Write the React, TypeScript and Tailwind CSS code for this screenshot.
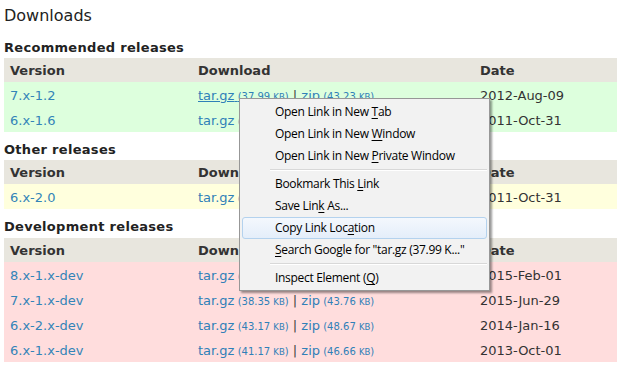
import React from "react";

type Row = {
  version: string;
  tar: string;
  zip: string;
  date: string;
  hover?: boolean;
};

const recommended: Row[] = [
  { version: "7.x-1.2", tar: "37.99", zip: "43.23", date: "2012-Aug-09", hover: true },
  { version: "6.x-1.6", tar: "41.02", zip: "46.18", date: "2011-Oct-31" },
];
const other: Row[] = [{ version: "6.x-2.0", tar: "42.81", zip: "48.03", date: "2011-Oct-31" }];
const dev: Row[] = [
  { version: "8.x-1.x-dev", tar: "39.12", zip: "44.50", date: "2015-Feb-01" },
  { version: "7.x-1.x-dev", tar: "38.35", zip: "43.76", date: "2015-Jun-29" },
  { version: "6.x-2.x-dev", tar: "43.17", zip: "48.67", date: "2014-Jan-16" },
  { version: "6.x-1.x-dev", tar: "41.17", zip: "46.66", date: "2013-Oct-01" },
];

function Size({ v }: { v: string }) {
  return (
    <span className="text-[10px]">
      {" "}({v} <span className="text-[8.5px]">KB</span>)
    </span>
  );
}

function Table({ rows, bg }: { rows: Row[]; bg: string }) {
  return (
    <div className="text-[13px]">
      <div className="grid grid-cols-[188px_282px_1fr] h-[24px] pt-[2px] items-center bg-[#e8e6de] font-bold text-[#333]">
        <div className="pl-[6px]">Version</div>
        <div className="pl-[6px]">Download</div>
        <div className="pl-[6px]">Date</div>
      </div>
      {rows.map((r) => (
        <div key={r.version} className={`grid grid-cols-[188px_282px_1fr] h-[25px] pt-[2px] items-center ${bg}`}>
          <div className="pl-[6px] text-[#3384b8]">{r.version}</div>
          <div className="pl-[6px] text-[#2f80b8] whitespace-nowrap">
            <span className={r.hover ? "underline" : ""}>
              tar.gz
              <Size v={r.tar} />
            </span>
            <span className="text-[#444]"> | </span>
            <span className={r.hover ? "underline" : ""}>
              zip
              <Size v={r.zip} />
            </span>
          </div>
          <div className="pl-[6px] text-[#333]">{r.date}</div>
        </div>
      ))}
    </div>
  );
}

function Item({ children, active }: { children: React.ReactNode; active?: boolean }) {
  return (
    <div
      className={`h-[22px] flex items-center pl-[32px] rounded-[3px] border ${
        active
          ? "border-[#b4d2ee] bg-gradient-to-b from-[#f4f8fd] to-[#e4eefa]"
          : "border-transparent"
      }`}
    >
      {children}
    </div>
  );
}

function Sep() {
  return (
    <div className="h-[6px] flex items-center pl-[28px]">
      <div className="h-px w-full bg-[#d8d8d8] border-b border-white box-content" />
    </div>
  );
}

function U({ children }: { children: React.ReactNode }) {
  return <span className="underline underline-offset-2">{children}</span>;
}

export default function App() {
  return (
    <div
      className="relative w-[621px] h-[366px] overflow-hidden bg-white px-[4px]"
      style={{ fontFamily: '"DejaVu Sans", Verdana, sans-serif' }}
    >
      <h2 className="mt-[6px] h-[20px] leading-[20px] text-[16px] text-[#222]">Downloads</h2>
      <h3 className="mt-[11px] mb-[3px] h-[18px] pt-[2px] leading-[18px] text-[13px] font-bold text-[#222] tracking-[0.3px]">
        Recommended releases
      </h3>
      <Table rows={recommended} bg="bg-[#ddffdd]" />
      <h3 className="mt-[7px] mb-[3px] h-[18px] pt-[2px] leading-[18px] text-[13px] font-bold text-[#222] tracking-[0.3px]">
        Other releases
      </h3>
      <Table rows={other} bg="bg-[#ffffdd]" />
      <h3 className="mt-[7px] mb-[4px] h-[18px] pt-[2px] leading-[18px] text-[13px] font-bold text-[#222] tracking-[0.3px]">
        Development releases
      </h3>
      <Table rows={dev} bg="bg-[#ffdddd]" />

      <div
        className="absolute left-[239px] top-[98px] w-[251px] h-[193px] bg-[#f2f2f2] border border-[#979797] shadow-[2px_2px_2px_rgba(0,0,0,0.4)] px-[2px] pt-[2px] text-[12px] tracking-[-0.3px] text-black"
        style={{ fontFamily: '"Open Sans", "Noto Sans", sans-serif' }}
      >
        <Item>
          Open Link in New&nbsp;<U>T</U>ab
        </Item>
        <Item>
          Open Link in New&nbsp;<U>W</U>indow
        </Item>
        <Item>
          Open Link in New&nbsp;<U>P</U>rivate Window
        </Item>
        <Sep />
        <Item>
          Bookmark This&nbsp;<U>L</U>ink
        </Item>
        <Item>
          Save Lin<U>k</U>&nbsp;As...
        </Item>
        <Item active>
          Copy Link Loc<U>a</U>tion
        </Item>
        <Item>
          <U>S</U>earch Google for "tar.gz (37.99 K..."
        </Item>
        <Sep />
        <Item>
          Inspect Element (<U>Q</U>)
        </Item>
      </div>
    </div>
  );
}
